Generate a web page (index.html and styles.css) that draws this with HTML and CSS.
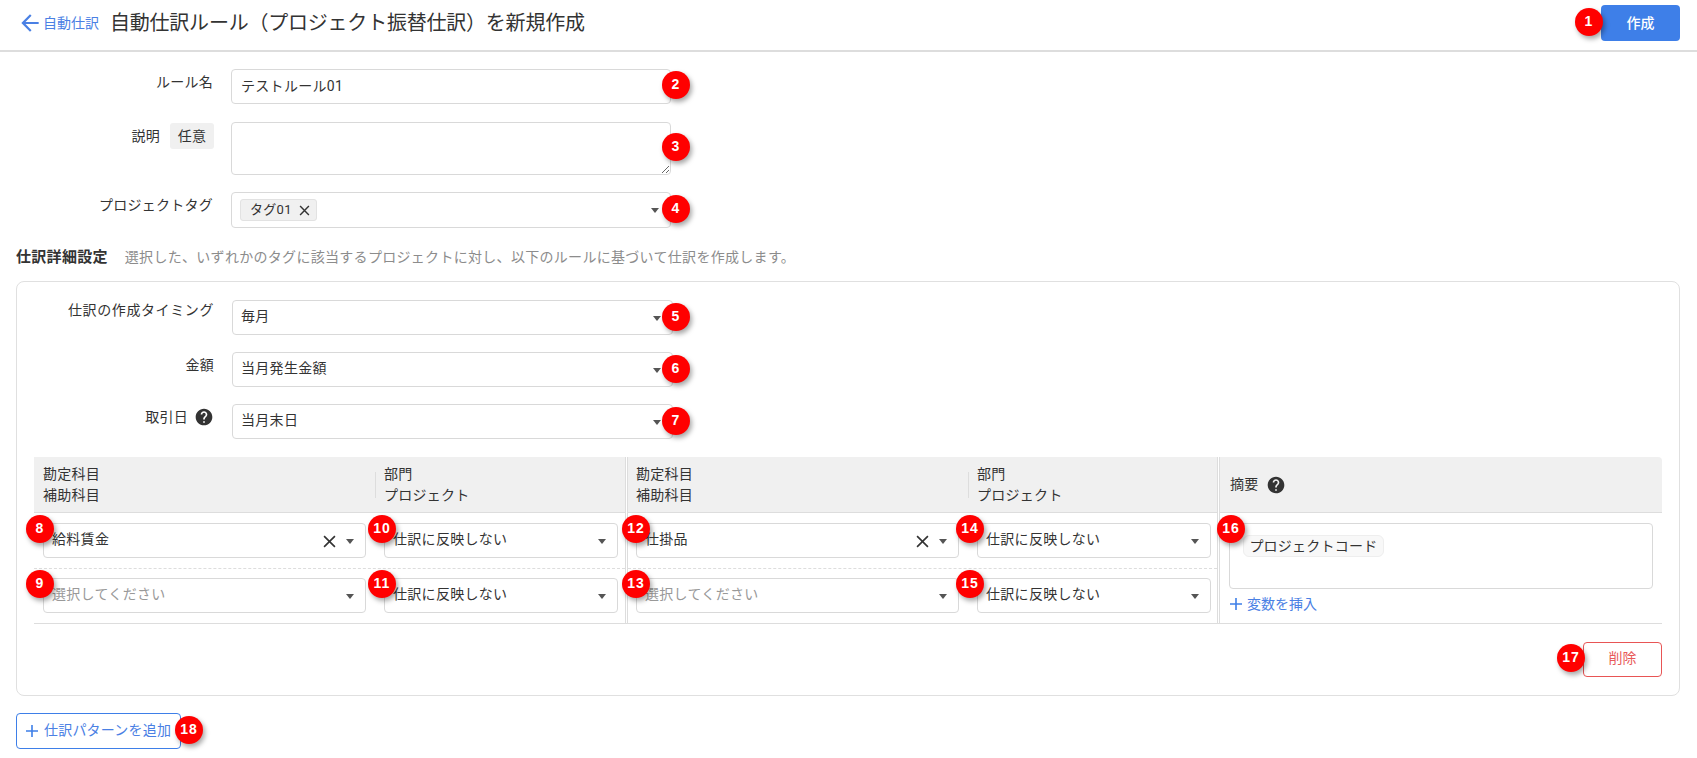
FILE: index.html
```html
<!DOCTYPE html>
<html lang="ja">
<head>
<meta charset="utf-8">
<title>自動仕訳ルール</title>
<link rel="stylesheet" href="styles.css">
</head>
<body>
<header class="topbar">
  <a class="back">
    <svg class="back-icon" viewBox="0 0 24 24"><path d="M20 11H7.83l5.59-5.59L12 4l-8 8 8 8 1.41-1.41L7.83 13H20v-2z"/></svg>
    <span>自動仕訳</span>
  </a>
  <h1 class="title">自動仕訳ルール（プロジェクト振替仕訳）を新規作成</h1>
  <button class="btn-primary">作成<span class="badge b1">1</span></button>
</header>

<main class="page">
  <div class="row">
    <div class="label">ルール名</div>
    <div class="control">
      <input class="input" value="テストルール01">
      <span class="badge b2">2</span>
    </div>
  </div>
  <div class="row row-desc">
    <div class="label label-flat"><span>説明</span><span class="optional">任意</span></div>
    <div class="control">
      <textarea class="textarea"></textarea>
      <span class="badge b3">3</span>
    </div>
  </div>
  <div class="row row-last">
    <div class="label">プロジェクトタグ</div>
    <div class="control">
      <div class="select select-tag">
        <span class="tag">タグ01<svg class="tag-x" viewBox="0 0 10 10"><path d="M1 1l8 8M9 1l-8 8"/></svg></span>
        <i class="caret"></i>
      </div>
      <span class="badge b4">4</span>
    </div>
  </div>

  <div class="section-head">
    <h2 class="section-title">仕訳詳細設定</h2>
    <p class="section-note">選択した、いずれかのタグに該当するプロジェクトに対し、以下のルールに基づいて仕訳を作成します。</p>
  </div>

  <section class="panel">
    <div class="panel-row">
      <div class="label label-top">仕訳の作成タイミング</div>
      <div class="control">
        <div class="select">毎月<i class="caret"></i></div>
        <span class="badge b-side">5</span>
      </div>
    </div>
    <div class="panel-row">
      <div class="label">金額</div>
      <div class="control">
        <div class="select">当月発生金額<i class="caret"></i></div>
        <span class="badge b-side">6</span>
      </div>
    </div>
    <div class="panel-row panel-row-last">
      <div class="label label-help">取引日
        <svg class="help" viewBox="0 0 24 24"><path d="M12 2C6.48 2 2 6.48 2 12s4.48 10 10 10 10-4.48 10-10S17.52 2 12 2zm1 17h-2v-2h2v2zm2.07-7.75l-.9.92C13.45 12.9 13 13.5 13 15h-2v-.5c0-1.1.45-2.1 1.17-2.83l1.24-1.26c.37-.36.59-.86.59-1.41 0-1.1-.9-2-2-2s-2 .9-2 2H8c0-2.21 1.79-4 4-4s4 1.79 4 4c0 .88-.36 1.68-.93 2.25z"/></svg>
      </div>
      <div class="control">
        <div class="select">当月末日<i class="caret"></i></div>
        <span class="badge b-side">7</span>
      </div>
    </div>

    <div class="journal">
      <div class="col col-debit">
        <div class="col-head">
          <div>勘定科目<br>補助科目</div>
          <div class="sub-head">部門<br>プロジェクト</div>
        </div>
        <div class="col-row col-row-first">
          <div class="control">
            <div class="select">給料賃金<svg class="clear" viewBox="0 0 12 12"><path d="M1 1l10 10M11 1L1 11"/></svg><i class="caret"></i></div>
            <span class="badge b-a">8</span>
          </div>
          <div class="control">
            <div class="select">仕訳に反映しない<i class="caret"></i></div>
            <span class="badge b-b">10</span>
          </div>
        </div>
        <div class="col-row">
          <div class="control">
            <div class="select placeholder">選択してください<i class="caret"></i></div>
            <span class="badge b-a">9</span>
          </div>
          <div class="control">
            <div class="select">仕訳に反映しない<i class="caret"></i></div>
            <span class="badge b-b">11</span>
          </div>
        </div>
      </div>

      <div class="col col-credit">
        <div class="col-head">
          <div>勘定科目<br>補助科目</div>
          <div class="sub-head">部門<br>プロジェクト</div>
        </div>
        <div class="col-row col-row-first">
          <div class="control">
            <div class="select">仕掛品<svg class="clear" viewBox="0 0 12 12"><path d="M1 1l10 10M11 1L1 11"/></svg><i class="caret"></i></div>
            <span class="badge b-c">12</span>
          </div>
          <div class="control">
            <div class="select">仕訳に反映しない<i class="caret"></i></div>
            <span class="badge b-d">14</span>
          </div>
        </div>
        <div class="col-row">
          <div class="control">
            <div class="select placeholder">選択してください<i class="caret"></i></div>
            <span class="badge b-c">13</span>
          </div>
          <div class="control">
            <div class="select">仕訳に反映しない<i class="caret"></i></div>
            <span class="badge b-d">15</span>
          </div>
        </div>
      </div>

      <div class="col-memo">
        <div class="col-head memo-head">摘要
          <svg class="help" viewBox="0 0 24 24"><path d="M12 2C6.48 2 2 6.48 2 12s4.48 10 10 10 10-4.48 10-10S17.52 2 12 2zm1 17h-2v-2h2v2zm2.07-7.75l-.9.92C13.45 12.9 13 13.5 13 15h-2v-.5c0-1.1.45-2.1 1.17-2.83l1.24-1.26c.37-.36.59-.86.59-1.41 0-1.1-.9-2-2-2s-2 .9-2 2H8c0-2.21 1.79-4 4-4s4 1.79 4 4c0 .88-.36 1.68-.93 2.25z"/></svg>
        </div>
        <div class="memo-body">
          <div class="control">
            <div class="memo-box"><span class="memo-chip">プロジェクトコード</span></div>
            <span class="badge b-e">16</span>
          </div>
          <a class="link-add">
            <svg class="plus" viewBox="0 0 12 12"><path d="M6 0v12M0 6h12"/></svg>変数を挿入
          </a>
        </div>
      </div>
    </div>

    <div class="panel-foot">
      <button class="btn-danger">削除<span class="badge b17">17</span></button>
    </div>
  </section>

  <button class="btn-add">
    <svg class="plus" viewBox="0 0 12 12"><path d="M6 0v12M0 6h12"/></svg>仕訳パターンを追加<span class="badge b18">18</span>
  </button>
</main>
</body>
</html>
```

FILE: styles.css
```css
* { box-sizing: border-box; }
html, body { margin: 0; height: 100%; overflow: hidden; }
body {
  background: #fff;
  color: #333;
  font-family: Roboto, "Noto Sans CJK JP", sans-serif;
  font-size: 14px;
  line-height: 20px;
}

/* header */
.topbar {
  display: flex;
  align-items: center;
  height: 52px;
  padding: 0 17px 4px;
  border-bottom: 2px solid #ddd;
}
.back { display: flex; align-items: center; color: #4a80e4; }
.back-icon { width: 26px; height: 26px; fill: #4a80e4; }
.title {
  margin: 0 0 0 11px;
  flex: 1;
  font-size: 20px;
  font-weight: 400;
  letter-spacing: -.22px;
  line-height: 28px;
}
.btn-primary {
  position: relative;
  width: 79px;
  height: 36px;
  padding: 0 0 3px;
  border: 0;
  border-radius: 4px;
  background: #3e7fe8;
  color: #fff;
  font: 500 14px Roboto, "Noto Sans CJK JP", sans-serif;
}

/* form */
.page { padding: 17px 17px 0 16px; }
.row {
  display: grid;
  grid-template-columns: 197px 440px;
  column-gap: 18px;
  margin-bottom: 18px;
}
.row-desc { margin-bottom: 17px; }
.row-last { margin-bottom: 0; }
.label {
  padding-top: 3px;
  letter-spacing: .25px;
  text-align: right;
  white-space: nowrap;
}
.label-top { padding-top: 0; letter-spacing: .6px; }
.label-flat {
  display: flex;
  justify-content: flex-end;
  align-items: center;
  gap: 10px;
  height: 26px;
  margin-top: 1px;
  margin-right: -1px;
  padding-top: 0;
}
.label-help {
  display: flex;
  justify-content: flex-end;
  align-items: center;
  gap: 6px;
  height: 26px;
  padding-top: 0;
}
.optional {
  width: 44px;
  height: 26px;
  border-radius: 3px;
  background: #f0f0f0;
  line-height: 26px;
  text-align: center;
}
.help { width: 20px; height: 20px; fill: #333; flex: none; }

.control { position: relative; }
.input, .textarea, .select {
  display: block;
  width: 100%;
  border: 1px solid #d9d9d9;
  border-radius: 4px;
  background: #fff;
  color: #333;
  font: 14px/20px Roboto, "Noto Sans CJK JP", sans-serif;
  letter-spacing: .3px;
}
.input { height: 35px; padding: 0 9px 3px; outline: 0; }
.textarea { height: 53px; padding: 6px 10px; outline: 0; resize: vertical; }
.select {
  position: relative;
  display: flex;
  align-items: center;
  height: 35px;
  padding: 0 0 3px 8px;
  white-space: nowrap;
}
.select-tag { height: 36px; padding: 0 0 0 8px; }
.placeholder { color: #999; }
.caret {
  position: absolute;
  right: 11px;
  top: 50%;
  margin-top: -2px;
  border-style: solid;
  border-width: 5px 4px 0;
  border-color: #555 transparent transparent;
}
.clear {
  position: absolute;
  right: 29px;
  top: 50%;
  width: 13px;
  height: 13px;
  margin-top: -6px;
  fill: none;
  stroke: #333;
  stroke-width: 1.5;
}
.tag {
  display: flex;
  align-items: center;
  width: 77px;
  height: 22px;
  padding-left: 9px;
  border: 1px solid #e2e2e2;
  border-radius: 3px;
  background: #f0f0f0;
  font-size: 13px;
}
.tag-x {
  width: 11px;
  height: 11px;
  margin-left: 7px;
  fill: none;
  stroke: #333;
  stroke-width: 1.3;
}

/* section */
.section-head {
  display: flex;
  align-items: center;
  gap: 17px;
  height: 20px;
  margin-top: 19px;
}
.section-title { margin: 0; font-size: 15px; font-weight: 700; letter-spacing: .3px; line-height: 20px; }
.section-note { margin: 0; color: #8c8c8c; font-size: 14px; letter-spacing: .3px; }

.panel {
  margin-top: 14px;
  padding: 18px 17px;
  border: 1px solid #e0e0e0;
  border-radius: 8px;
}
.panel-row {
  display: grid;
  grid-template-columns: 198px 441px;
  margin-bottom: 17px;
}
.panel-row > .label { width: 180px; }
.panel-row-last { margin-bottom: 18px; }

/* journal table */
.journal {
  display: grid;
  grid-template-columns: 594px 592px 1fr;
  border-bottom: 1px solid #ddd;
}
.col { border-right: 3px double #ddd; }
.col-head, .col-row {
  display: grid;
  grid-template-columns: 323px 234px;
  column-gap: 18px;
}
.col-head {
  align-items: center;
  height: 56px;
  border-bottom: 1px solid #ddd;
  background: #f0f0f0;
  letter-spacing: .25px;
  line-height: 21px;
}
.col-debit .col-head, .col-debit .col-row { padding-left: 9px; }
.col-credit .col-head, .col-credit .col-row { padding-left: 8px; }
.sub-head { position: relative; }
.sub-head::before {
  content: "";
  position: absolute;
  left: -9px;
  top: 8px;
  bottom: 8px;
  border-left: 1px solid #ddd;
}
.col-row {
  padding-top: 9px;
  padding-bottom: 10px;
}
.col-row-first { padding-top: 10px; border-bottom: 1px dashed #ddd; }

.col-memo { min-width: 0; }
.memo-head {
  display: flex;
  align-items: center;
  gap: 7px;
  padding-left: 10px;
  border-top-right-radius: 4px;
}
.memo-body { padding: 10px 9px 0; }
.memo-box {
  height: 66px;
  padding: 11px 13px;
  border: 1px solid #d9d9d9;
  border-radius: 4px;
}
.memo-chip {
  display: block;
  width: 141px;
  height: 22px;
  border: 1px solid #eee;
  border-radius: 6px;
  background: #f8f8f8;
  letter-spacing: .25px;
  line-height: 20px;
  text-align: center;
}
.link-add {
  display: flex;
  align-items: center;
  height: 20px;
  margin-top: 5px;
  padding-left: 1px;
  color: #4a80e4;
}
.plus {
  width: 12px;
  height: 12px;
  margin-right: 5px;
  fill: none;
  stroke: #3e7fe8;
  stroke-width: 1.6;
}

.panel-foot { display: flex; justify-content: flex-end; margin-top: 18px; }
.btn-danger {
  position: relative;
  width: 79px;
  height: 35px;
  padding: 0 0 5px;
  border: 1px solid #e85555;
  border-radius: 4px;
  background: #fff;
  color: #e85a5a;
  font: 14px Roboto, "Noto Sans CJK JP", sans-serif;
}
.btn-add {
  position: relative;
  display: flex;
  align-items: center;
  width: 165px;
  height: 36px;
  margin-top: 17px;
  padding: 0 0 4px 9px;
  border: 1px solid #3e7fe8;
  border-radius: 4px;
  background: #fff;
  color: #4a80e4;
  font: 14px Roboto, "Noto Sans CJK JP", sans-serif;
  letter-spacing: .2px;
}
.btn-add .plus { margin: 4px 6px 0 0; }

/* callout badges */
.badge {
  position: absolute;
  display: block;
  width: 28px;
  height: 28px;
  border-radius: 50%;
  background: #f00;
  box-shadow: 2px 3px 5px rgba(0, 0, 0, .35);
  color: #fff;
  font: 700 14px/26px "Liberation Sans", sans-serif;
  letter-spacing: 1px;
  text-align: center;
}
.b1 { left: -26px; top: 3px; }
.b2 { right: -19px; top: 2px; }
.b3 { right: -19px; top: 11px; }
.b4 { right: -19px; top: 3px; }
.b-side { right: -17px; top: 3px; }
.b-a { left: -17px; top: -8px; }
.b-b { left: -16px; top: -8px; }
.b-c { left: -14px; top: -8px; }
.b-d { left: -21px; top: -8px; }
.b-e { left: -12px; top: -8px; }
.b17 { left: -27px; top: 1px; }
.b18 { right: -23px; top: 2px; }
```
